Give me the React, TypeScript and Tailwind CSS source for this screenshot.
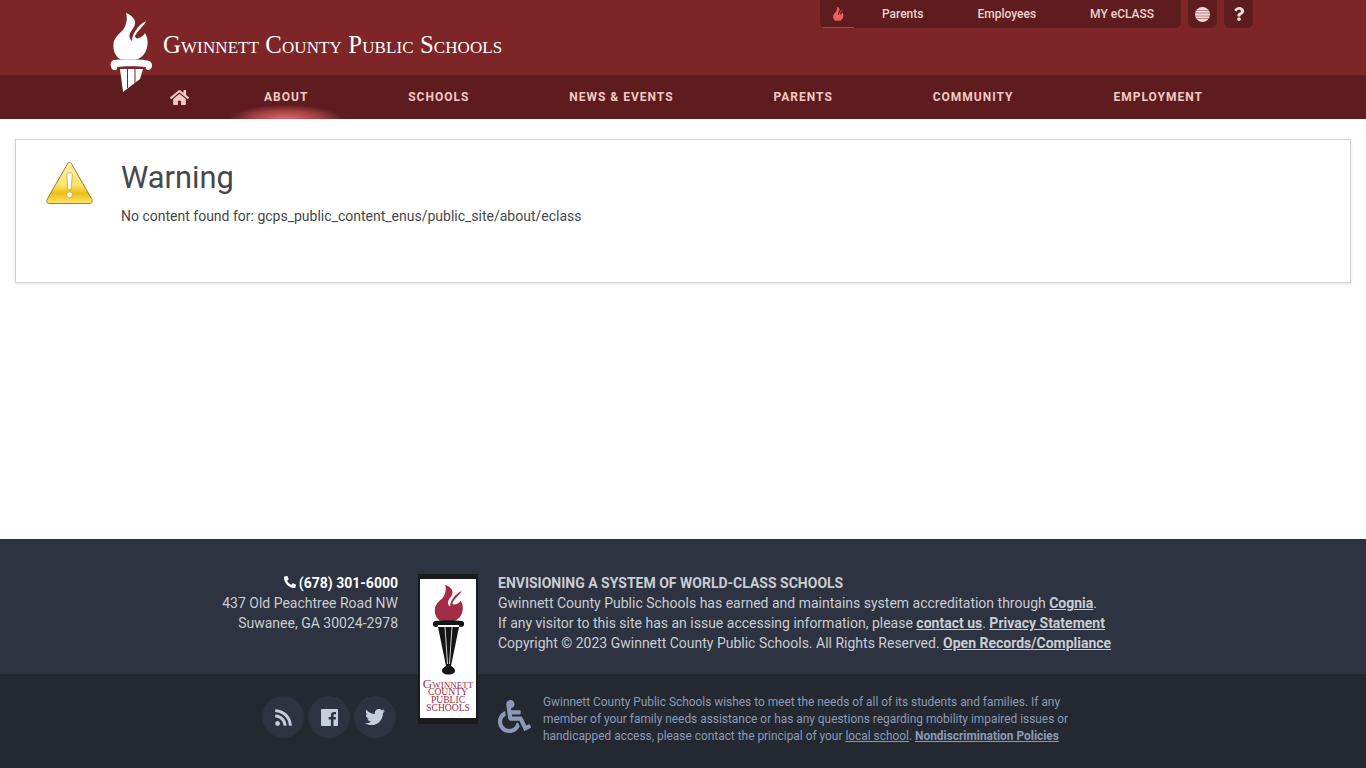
import { FaHome, FaPhoneAlt, FaQuestion, FaRss, FaTwitter, FaWheelchair } from "react-icons/fa";

const navItems = ["About", "Schools", "News & Events", "Parents", "Community", "Employment"];

const FlamePath = "M16 1C21 3 26 7 25 12C24 17 19 20 19.500 25C20 27 21 28 22 29C22 22 28 13 36 9C35 13 28 18 25 24C25 26 27 27 29 26C32 25 34 23 35 21C37 25 38 28 37.500 32C37 39 34 44 28 47L10 47C5 44 3 38 3.500 32C4 26 9 22 13 18C16 14 18 7 16 1Z";

const Torch = () => (
  <svg viewBox="0 0 43 81" className="relative z-10 w-[43px] h-[81px] shrink-0 mt-[12px]">
    <path d={FlamePath} fill="#ffffff" />
    <path d="M4 48C10 47 33 47 39 49C43 50 43 57 39 58C36 58 35 56 36 55C30 54 13 54 7 55C8 56 6 59 4 58C0 57-1 49 4 48Z" fill="#ffffff" />
    <path d="M10 57L33 57L30 67L13 80Z" fill="#ffffff" />
    <path d="M17.500 56L17.500 76M25 56L25 71" stroke="#7d2527" strokeWidth="1" />
  </svg>
);

const WarningIcon = () => (
  <svg viewBox="0 0 48 44" className="w-[47px] h-[44px]">
    <defs>
      <linearGradient id="warn" x1="0" y1="0" x2="0" y2="1">
        <stop offset="0" stopColor="#fff3a8" />
        <stop offset="0.55" stopColor="#fbe36c" />
        <stop offset="0.75" stopColor="#eebd12" />
        <stop offset="1" stopColor="#fbe56f" />
      </linearGradient>
    </defs>
    <path d="M24 1C22.500 1 21.500 3 20.500 5L1.500 38C0 41 1 43 4 43L44 43C47 43 48 41 46.500 38L27.500 5C26.500 3 25.500 1 24 1Z" fill="url(#warn)" stroke="#8f7b35" strokeWidth="1" />
    <path d="M21 13C21 11 27 11 27 13L25.500 29L22.500 29Z" fill="#ffffff" stroke="#b9982b" strokeWidth="0.7" />
    <circle cx="24" cy="34" r="3" fill="#ffffff" stroke="#b9982b" strokeWidth="0.7" />
  </svg>
);

const FooterLogo = () => (
  <div className="absolute left-[418px] top-[35px] w-[60px] h-[150px] bg-[#1a1a1a] pt-[5px] pb-[6px] px-[2px]">
    <div className="h-full bg-white flex flex-col items-center pt-[5px]">
      <svg viewBox="0 0 36 92" className="w-[36px] h-[92px] shrink-0">
        <path d={FlamePath} fill="#a32c45" transform="translate(2 0) scale(0.82 0.78)" />
        <path d="M5 37C10 36 27 36 32 37C35 38 35 43 31 43C29 43 29 42 29 41L8 41C8 42 8 43 6 43C2 43 2 38 5 37Z" fill="#151515" />
        <path d="M8 43L29 43L21 82C25 84 26 87 24 89C21 91 16 91 13 89C11 87 12 84 16 82Z" fill="#151515" />
        <path d="M15 43L17.500 80M22 43L19.500 80" stroke="#ffffff" strokeWidth="0.8" />
      </svg>
      <div className="mt-[4px] leading-[8px] text-center text-[#a32c45] font-['Liberation_Serif',serif] whitespace-nowrap text-[9.600px]">
        <div className="text-[13px] [font-variant:small-caps]">Gwinnett</div>
        <div>COUNTY</div>
        <div>PUBLIC</div>
        <div>SCHOOLS</div>
      </div>
    </div>
  </div>
);

export default function App() {
  return (
    <div className="min-h-[768px] flex flex-col bg-white font-['Roboto',sans-serif]">
      <header className="h-[75px] bg-[#7d2527] flex justify-between pl-[110px] pr-[113px]">
        <div className="flex items-start">
          <Torch />
          <div className="ml-[10px] mt-[31px] text-[24.750px] tracking-[0.1px] leading-[27px] text-white font-['Liberation_Serif',serif] [font-variant:small-caps] whitespace-nowrap">
            Gwinnett County Public Schools
          </div>
        </div>
        <div className="flex items-start gap-[7px]">
          <div className="w-[361px] h-[28px] bg-[#5e1c1e] rounded-b-md flex items-center text-[12px] font-medium text-[#eed2cf]">
            <div className="ml-[3px] w-[31px] h-[27px] border-b border-[#8f5153] flex items-center justify-center">
              <svg viewBox="0 0 43 50" className="w-[13px] h-[16px]">
                <path d={FlamePath} fill="#ef5f5f" />
              </svg>
            </div>
            <span className="ml-[28px]">Parents</span>
            <span className="ml-[54px]">Employees</span>
            <span className="ml-[54px]">MY eCLASS</span>
          </div>
          <div className="w-[29px] h-[28px] bg-[#5e1c1e] rounded-b-md flex items-center justify-center">
            <svg viewBox="0 0 15 15" className="w-[15px] h-[15px]">
              <circle cx="7.500" cy="7.500" r="7.500" fill="#f1dcd9" />
              <path d="M0 3.500H15M0 6H15M0 9H15M0 11.500H15" stroke="#8b4a4b" strokeWidth="0.6" />
            </svg>
          </div>
          <div className="w-[29px] h-[28px] bg-[#5e1c1e] rounded-b-md flex items-center justify-center text-[#f1dcd9] text-[14px]">
            <FaQuestion />
          </div>
        </div>
      </header>

      <nav className="h-[44px] bg-[#5e1c1e] flex items-center pl-[170px] text-[12px] font-bold tracking-[1px] uppercase text-[#f2c9c4]">
        <FaHome className="text-[19px] mr-[75px] shrink-0" />
        <div className="flex gap-[99.900px]">
          {navItems.map((item) => (
            <div key={item} className="relative whitespace-nowrap">
              {item}
              {item === "About" && (
                <div className="absolute left-1/2 -translate-x-1/2 top-[17px] w-[112px] h-[14px] bg-[radial-gradient(ellipse_at_bottom,#d96a6b_0%,#ab4547_38%,transparent_72%)]" />
              )}
            </div>
          ))}
        </div>
      </nav>

      <main className="flex-1 px-[15px] pt-[20px] pb-[256px]">
        <div className="h-[144px] border border-[#d2d2d2] shadow-[0_1px_3px_rgba(0,0,0,0.12)] flex pl-[30px] pt-[21px]">
          <WarningIcon />
          <div className="ml-[28px] text-[#45484c]">
            <h1 className="text-[30.800px] leading-[36px] -mt-[1px]">Warning</h1>
            <p className="mt-[10px] text-[14px] leading-[20px]">No content found for: gcps_public_content_enus/public_site/about/eclass</p>
          </div>
        </div>
      </main>

      <footer className="relative text-[14px] leading-[20px]">
        <div className="h-[135px] bg-[#2d3340] flex pt-[34px] text-[#c9cdd4]">
          <div className="w-[398px] text-right">
            <div className="font-bold text-white flex items-center justify-end gap-[3px]">
              <FaPhoneAlt className="text-[12px] mb-[2px]" />
              <span>(678) 301-6000</span>
            </div>
            <div>437 Old Peachtree Road NW</div>
            <div>Suwanee, GA 30024-2978</div>
          </div>
          <div className="ml-[100px]">
            <div className="font-bold">ENVISIONING A SYSTEM OF WORLD-CLASS SCHOOLS</div>
            <div>
              Gwinnett County Public Schools has earned and maintains system accreditation through <a className="font-bold underline">Cognia</a>.
            </div>
            <div>
              If any visitor to this site has an issue accessing information, please <a className="font-bold underline">contact us</a>. <a className="font-bold underline">Privacy Statement</a>
            </div>
            <div>
              Copyright © 2023 Gwinnett County Public Schools. All Rights Reserved. <a className="font-bold underline">Open Records/Compliance</a>
            </div>
          </div>
        </div>
        <div className="h-[94px] bg-[#232831] flex pl-[262px] pt-[19px]">
          <div className="flex gap-[4px] mt-[3px] text-[#c5cedd]">
            <div className="w-[42px] h-[42px] rounded-full bg-[#2d3340] flex items-center justify-center text-[19px]"><FaRss /></div>
            <div className="w-[42px] h-[42px] rounded-full bg-[#2d3340] flex items-center justify-center">
              <svg viewBox="0 0 17 17" className="w-[17px] h-[17px]">
                <path fillRule="evenodd" d="M1 0H16C16.600 0 17 .400 17 1V16C17 16.600 16.600 17 16 17H12.500V10.500H14.700L15 8H12.500V6.400C12.500 5.700 12.700 5.200 13.700 5.200H15V3C14.700 3 14 2.900 13.100 2.900C11.200 2.900 9.900 4.100 9.900 6.100V8H7.700V10.500H9.900V17H1C.400 17 0 16.600 0 16V1C0 .400 .400 0 1 0Z" fill="currentColor" />
              </svg>
            </div>
            <div className="w-[42px] h-[42px] rounded-full bg-[#2d3340] flex items-center justify-center text-[20px]"><FaTwitter /></div>
          </div>
          <FaWheelchair className="ml-[102px] mt-[7px] text-[33px] text-[#8c9ab8] shrink-0" />
          <p className="ml-[12px] mt-[1px] w-[540px] text-[11.900px] leading-[17px] text-[#8c9ab8]">
            Gwinnett County Public Schools wishes to meet the needs of all of its students and families. If any member of your family needs assistance or has any questions regarding mobility impaired issues or handicapped access, please contact the principal of your <a className="underline">local school</a>. <a className="font-bold underline">Nondiscrimination Policies</a>
          </p>
        </div>
        <FooterLogo />
      </footer>
    </div>
  );
}
